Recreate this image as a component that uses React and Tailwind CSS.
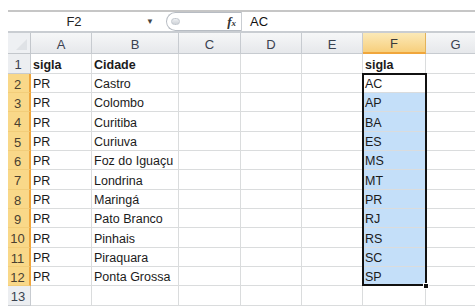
const cols = [
  { key: "A", w: "w-[61px]" },
  { key: "B", w: "w-[87px]" },
  { key: "C", w: "w-[62px]" },
  { key: "D", w: "w-[61px]" },
  { key: "E", w: "w-[61px]" },
  { key: "F", w: "w-[63px]" },
  { key: "G", w: "w-[60px]" },
];

const rows = [
  { n: 1, h: "h-[20px]", a: "sigla", b: "Cidade", f: "sigla", bold: true },
  { n: 2, h: "h-[19px]", a: "PR", b: "Castro", f: "AC" },
  { n: 3, h: "h-[19px]", a: "PR", b: "Colombo", f: "AP" },
  { n: 4, h: "h-[20px]", a: "PR", b: "Curitiba", f: "BA" },
  { n: 5, h: "h-[19px]", a: "PR", b: "Curiuva", f: "ES" },
  { n: 6, h: "h-[19px]", a: "PR", b: "Foz do Iguaçu", f: "MS" },
  { n: 7, h: "h-[20px]", a: "PR", b: "Londrina", f: "MT" },
  { n: 8, h: "h-[19px]", a: "PR", b: "Maringá", f: "PR" },
  { n: 9, h: "h-[19px]", a: "PR", b: "Pato Branco", f: "RJ" },
  { n: 10, h: "h-[20px]", a: "PR", b: "Pinhais", f: "RS" },
  { n: 11, h: "h-[19px]", a: "PR", b: "Piraquara", f: "SC" },
  { n: 12, h: "h-[19px]", a: "PR", b: "Ponta Grossa", f: "SP" },
  { n: 13, h: "h-[20px]", a: "", b: "", f: "" },
];

function FormulaBar() {
  return (
    <div className="mt-[10px] ml-[8px] flex h-[23px] items-stretch border-t-2 border-b-2 border-t-[#c6c6c6] border-b-[#c9cdd2] bg-white">
      <div className="flex w-[132px] shrink-0 items-center justify-center pt-[1px] text-[13px] text-[#222]">F2</div>
      <div className="flex w-[20px] shrink-0 items-center justify-center text-[8px] text-[#444]">▼</div>
      <div className="flex w-[81px] shrink-0 items-center">
        <div className="ml-[6px] flex h-[19px] w-[75px] items-center rounded-l-full border-l border-t border-b border-[#b7bcc3] bg-white">
          <div className="ml-[4px] h-[7px] w-[9px] rounded-full border border-[#c2c7ce] bg-gradient-to-b from-[#eef0f3] to-[#cfd3d8]" />
          <div className="ml-auto mr-[5px] font-['Liberation_Serif'] text-[13px] font-bold italic text-[#333]">
            f<span className="text-[9px]">x</span>
          </div>
        </div>
      </div>
      <div className="flex flex-1 items-center border-l border-[#c9cdd2] pl-[8px] pt-[1px] text-[13px] text-[#111]">AC</div>
    </div>
  );
}

function Sheet() {
  return (
    <div className="relative ml-[8px]">
      <div className="flex h-[21px]">
        <div className="relative w-[23px] shrink-0 border-r border-b border-[#c3c7cc] bg-[#eef0f3]">
          <div className="absolute right-[3px] bottom-[3px] h-0 w-0 border-t-[11px] border-r-[11px] border-t-transparent border-r-[#dfe2e6]" />
        </div>
        {cols.map((c) => (
          <div
            key={c.key}
            className={`${c.w} flex shrink-0 items-center justify-center border-r pt-[3px] text-[13px] ${
              c.key === "F"
                ? "border-b-2 border-b-[#f0a63c] border-r-[#e3b35a] bg-gradient-to-b from-[#fbe9b7] to-[#f7cf7c] text-[#3a3a3a]"
                : "border-b border-[#c7cbd0] bg-gradient-to-b from-[#f6f7f8] to-[#e6e8eb] text-[#3a4250]"
            }`}
          >
            {c.key}
          </div>
        ))}
      </div>
      {rows.map((r) => {
        const sel = r.n >= 2 && r.n <= 12;
        return (
          <div key={r.n} className={`flex ${r.h}`}>
            <div
              className={`flex w-[23px] shrink-0 items-center justify-center pt-[3px] pr-[2px] text-[13px] ${
                sel
                  ? "border-r-2 border-b border-r-[#f0a63c] border-b-[#f2cd7a] bg-[#f9d889] text-[#4a4030]"
                  : "border-r border-b border-[#c7cbd0] bg-[#eceef1] text-[#3a4250]"
              }`}
            >
              {r.n}
            </div>
            {cols.map((c) => {
              let text = "";
              if (c.key === "A") text = r.a;
              if (c.key === "B") text = r.b;
              if (c.key === "F") text = r.f;
              const blue = c.key === "F" && r.n >= 3 && r.n <= 12;
              return (
                <div
                  key={c.key}
                  className={`${c.w} flex shrink-0 items-center overflow-hidden whitespace-nowrap border-r border-b border-[#dadcdd] pl-[2px] pt-[3px] text-[12.5px] text-[#1b1b1b] ${
                    blue ? "bg-[#c4dff9]" : "bg-white"
                  } ${r.bold ? "font-bold" : ""}`}
                >
                  {text}
                </div>
              );
            })}
          </div>
        );
      })}
      <div className="pointer-events-none absolute left-[354px] top-[40px] h-[213px] w-[65px] border-2 border-[#111]" />
      <div className="pointer-events-none absolute left-[415px] top-[250px] h-[6px] w-[6px] border border-white bg-[#111]" />
    </div>
  );
}

export default function App() {
  return (
    <div className="h-[306px] w-[475px] overflow-hidden bg-white font-['Liberation_Sans',Arial,sans-serif]">
      <FormulaBar />
      <Sheet />
    </div>
  );
}
